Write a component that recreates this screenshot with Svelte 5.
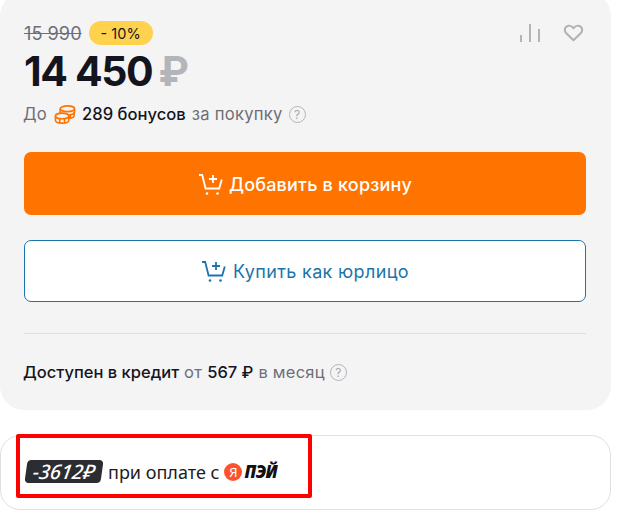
<script>
	const cartPath = "M1 2h3.2l3.4 13.5h13.6l2.6-9";
</script>

<div class="page">
	<section class="panel">
		<div class="top">
			<div class="prices">
				<div class="old-row">
					<span class="old">15 990</span>
					<span class="badge">- 10%</span>
				</div>
				<div class="price">14 450 <span class="rub">₽</span></div>
			</div>
			<div class="actions">
				<svg width="20" height="18" viewBox="0 0 20 18" fill="none" stroke="#b4b4b8" stroke-width="2">
					<path d="M1 18v-7M10 18V0M19 18V5" />
				</svg>
				<svg width="21" height="18" viewBox="0 0 22 20" fill="none" stroke="#b0b0b4" stroke-width="2.2">
					<path d="M11 18 3 10.3C.6 8 .9 4.600 3.200 2.900 5.500 1.300 8.800 1.700 11 4.600 13.200 1.700 16.500 1.300 18.800 2.900 21.100 4.600 21.400 8 19 10.300Z" stroke-linejoin="round" />
				</svg>
			</div>
		</div>

		<div class="bonus">
			<span class="muted">До</span>
			<svg class="coins" width="22" height="21" viewBox="0 0 23 21" fill="none" stroke="#ff7300" stroke-width="1.700">
				<ellipse cx="14" cy="4.500" rx="7.500" ry="3" />
				<path d="M6.500 4.500v3.500c0 1.700 3.400 3 7.500 3s7.500-1.300 7.500-3V4.500" />
				<ellipse cx="8.500" cy="12" rx="7" ry="3" fill="#f4f4f5" />
				<path d="M1.500 12v4.500c0 1.700 3.100 3 7 3s7-1.300 7-3V12M6 15v4M11 15v4M17 10.500v3.500M21 8v4c0 1-2 2-5.500 2.500" />
			</svg>
			<span class="strong">289 бонусов</span>
			<span class="muted">за покупку</span>
			<span class="hint">?</span>
		</div>

		<button class="btn primary">
			<svg width="25" height="23" viewBox="0 0 25 23" fill="none" stroke="#fff" stroke-width="1.800">
				<path d={cartPath} />
				<path d="M15 2v8M11 6h8" />
				<circle cx="9" cy="20.500" r="1.300" fill="#fff" stroke="none" />
				<circle cx="19.500" cy="20.500" r="1.300" fill="#fff" stroke="none" />
			</svg>
			Добавить в корзину
		</button>

		<button class="btn outline">
			<svg width="25" height="23" viewBox="0 0 25 23" fill="none" stroke="#1b75ab" stroke-width="1.800">
				<path d={cartPath} />
				<path d="M15 2v8M11 6h8" />
				<circle cx="9" cy="20.500" r="1.300" fill="#1b75ab" stroke="none" />
				<circle cx="19.500" cy="20.500" r="1.300" fill="#1b75ab" stroke="none" />
			</svg>
			Купить как юрлицо
		</button>

		<hr />

		<div class="credit">
			<span class="strong">Доступен в кредит</span>
			<span class="muted">от</span>
			<span class="strong">567 ₽</span>
			<span class="muted">в месяц</span>
			<span class="hint">?</span>
		</div>
	</section>

	<section class="pay">
		<span class="discount">−3612₽</span>
		<span class="pay-text">при оплате с</span>
		<span class="ya">Я</span>
		<span class="pay-word">ПЭЙ</span>
		<div class="marker"></div>
	</section>
</div>

<style>
	:global(body) {
		background: #fff;
		font-family: Inter, "Liberation Sans", sans-serif;
	}
	.page {
		width: 611px;
		overflow: hidden;
		height: 527px;
	}
	.panel {
		background: #f4f4f5;
		border-radius: 24px;
		margin-top: -8px;
		height: 418px;
		padding: 29px 25px 0 24px;
		box-sizing: border-box;
	}
	.top {
		display: flex;
		justify-content: space-between;
	}
	.old-row {
		display: flex;
		align-items: center;
		gap: 7px;
		height: 24px;
	}
	.old {
		font-size: 18.2px;
		color: #6e6e78;
		text-decoration: line-through;
	}
	.badge {
		background: #ffd24d;
		border-radius: 12px;
		height: 24px;
		width: 64px;
		display: flex;
		align-items: center;
		justify-content: center;
		font-size: 14.5px;
		color: #14141e;
	}
	.price {
		font-size: 41px;
		font-weight: 700;
		color: #14141e;
		line-height: 50px;
		margin-top: 1px;
		white-space: nowrap;
		letter-spacing: -1.4px;
	}
	.rub {
		color: #b4b4bb;
		font-weight: 700;
		letter-spacing: 0;
		margin-left: -2px;
	}
	.actions {
		display: flex;
		gap: 23px;
		margin-top: 3px;
		margin-right: 2px;
		height: 22px;
	}
	.bonus {
		display: flex;
		align-items: center;
		font-size: 16.6px;
		gap: 6px;
		margin-top: 6px;
		margin-left: -1px;
		height: 24px;
	}
	.coins {
		margin: 0 0 0 1px;
	}
	.muted {
		color: #6e6e78;
		letter-spacing: 0.25px;
	}
	.strong {
		color: #14141e;
		font-weight: 500;
	}
	.hint {
		width: 15px;
		height: 15px;
		border: 1.500px solid #b4b4b8;
		border-radius: 50%;
		color: #a8a8ac;
		font-size: 12px;
		display: flex;
		align-items: center;
		justify-content: center;
	}
	.btn {
		display: flex;
		align-items: center;
		justify-content: center;
		gap: 6px;
		width: 562px;
		height: 63px;
		padding: 1px 0 0;
		border-radius: 7px;
		font: 500 18px Inter, "Liberation Sans", sans-serif;
		letter-spacing: 0.2px;
		box-sizing: border-box;
	}
	.primary {
		background: #ff7300;
		border: 0;
		color: #fff;
		margin-top: 26px;
	}
	.outline {
		background: #fff;
		border: 1px solid #1b75ab;
		color: #1b75ab;
		margin-top: 25px;
		height: 62px;
		font-weight: 400;
		gap: 7px;
		letter-spacing: 0.35px;
	}
	hr {
		border: 0;
		border-top: 1px solid #dedee0;
		margin: 31px 0 0;
	}
	.credit {
		display: flex;
		align-items: center;
		gap: 5px;
		font-size: 16.5px;
		margin-top: 26px;
		margin-left: -1px;
		height: 24px;
	}
	.pay {
		position: relative;
		display: flex;
		align-items: center;
		margin-top: 25px;
		height: 75px;
		box-sizing: border-box;
		border: 1px solid #e0e0e0;
		border-radius: 20px;
		padding: 0 0 2px 25px;
		font-family: "Noto Sans", "Open Sans", sans-serif;
	}
	.discount {
		background: #2b2d33;
		color: #fff;
		font-size: 20px;
		font-style: italic;
		font-weight: 500;
		height: 23px;
		line-height: 23px;
		width: 76px;
		text-align: center;
		border-radius: 4px;
		transform: skewX(-8deg);
		white-space: nowrap;
	}
	.pay-text {
		font-size: 18px;
		color: #1c1c1c;
		margin-left: 6px;
	}
	.ya {
		width: 18px;
		height: 18px;
		border-radius: 50%;
		background: #fc5230;
		color: #fff;
		font-size: 13px;
		display: flex;
		align-items: center;
		justify-content: center;
		margin-left: 5px;
	}
	.pay-word {
		font-size: 17px;
		font-weight: 900;
		font-style: italic;
		color: #111;
		margin-left: 2px;
		letter-spacing: -0.5px;
	}
	.marker {
		position: absolute;
		left: 15px;
		top: -2px;
		width: 296px;
		height: 64px;
		box-sizing: border-box;
		border: 4px solid #ff0000;
		border-radius: 2px;
	}
</style>
